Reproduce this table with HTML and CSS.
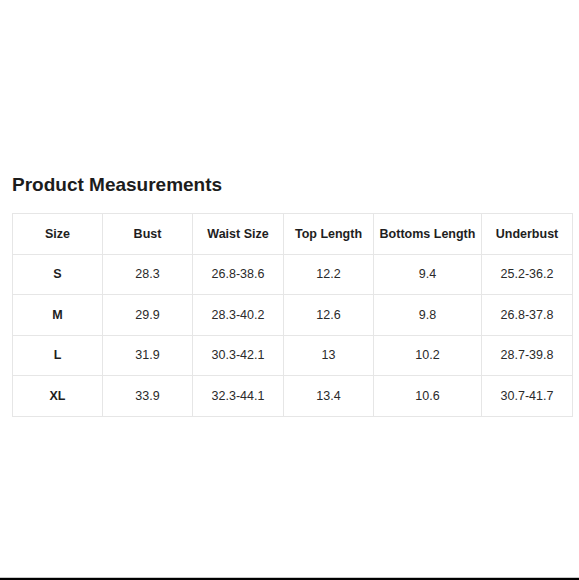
FILE: index.html
```html
<!DOCTYPE html>
<html>
<head>
<meta charset="utf-8">
<link rel="stylesheet" href="styles.css">
</head>
<body>
<div class="page">
  <main class="content">
    <h1 class="title">Product Measurements</h1>
    <table class="sizes">
      <colgroup>
        <col class="c90"><col class="c90"><col class="c91"><col class="c90"><col class="c108"><col class="c91">
      </colgroup>
      <thead>
        <tr><th>Size</th><th>Bust</th><th>Waist Size</th><th>Top Length</th><th>Bottoms Length</th><th>Underbust</th></tr>
      </thead>
      <tbody>
        <tr><th>S</th><td>28.3</td><td>26.8-38.6</td><td>12.2</td><td>9.4</td><td>25.2-36.2</td></tr>
        <tr><th>M</th><td>29.9</td><td>28.3-40.2</td><td>12.6</td><td>9.8</td><td>26.8-37.8</td></tr>
        <tr><th>L</th><td>31.9</td><td>30.3-42.1</td><td>13</td><td>10.2</td><td>28.7-39.8</td></tr>
        <tr><th>XL</th><td>33.9</td><td>32.3-44.1</td><td>13.4</td><td>10.6</td><td>30.7-41.7</td></tr>
      </tbody>
    </table>
  </main>
  <div class="bottom-bar"></div>
</div>
</body>
</html>
```

FILE: styles.css
```css
html, body {
  margin: 0;
  padding: 0;
  background: #fff;
}
.page {
  height: 580px;
  display: flex;
  flex-direction: column;
  font-family: "Liberation Sans", Arial, sans-serif;
  color: #222;
}
.content {
  padding: 174px 7px 0 12px;
}
.title {
  margin: 0 0 17px 0;
  font-size: 19px;
  line-height: 22px;
  font-weight: bold;
  color: #1c1c1c;
}
.sizes {
  border-collapse: collapse;
  table-layout: fixed;
  width: 560px;
  font-size: 12.5px;
}
.c90 { width: 90px; }
.c91 { width: 91px; }
.c108 { width: 108px; }
.sizes th, .sizes td {
  border: 1px solid #e6e6e6;
  height: 39.5px;
  padding: 0;
  text-align: center;
  vertical-align: middle;
  white-space: nowrap;
}
.sizes th {
  font-weight: bold;
  color: #1e1e1e;
}
.sizes td {
  font-weight: normal;
  color: #2a2a2a;
}
.bottom-bar {
  margin-top: auto;
  height: 2px;
  background: #000;
  border-top: 1px solid #c8c8c8;
}
```
